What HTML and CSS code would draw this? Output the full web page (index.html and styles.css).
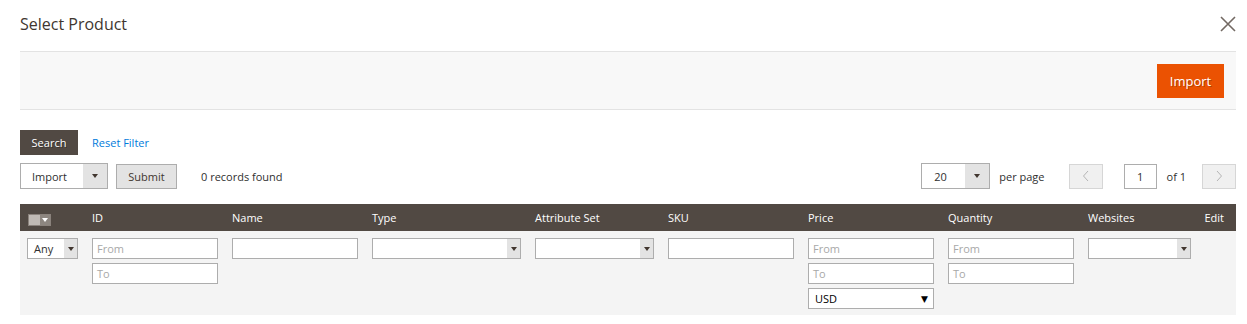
FILE: index.html
```html
<!DOCTYPE html>
<html>
<head>
<meta charset="utf-8">
<link rel="stylesheet" href="styles.css">
</head>
<body>
<div class="modal">
  <header class="modal-header">
    <h1 class="title">Select Product</h1>
    <button class="close" aria-label="Close">
      <svg width="16" height="16" viewBox="0 0 16 16"><path d="M1 1L15 15M15 1L1 15" stroke="#736963" stroke-width="1.6" fill="none"/></svg>
    </button>
  </header>
  <div class="toolbar">
    <button class="btn-primary">Import</button>
  </div>

  <div class="filter-actions">
    <button class="btn-search">Search</button>
    <a class="link" href="#">Reset Filter</a>
  </div>

  <div class="grid-bar">
    <div class="bar-left">
      <div class="sel sel-big w-import"><span class="sel-val">Import</span><span class="sel-arrow big"><i class="tri"></i></span></div>
      <button class="btn-secondary">Submit</button>
      <span class="records">0 records found</span>
    </div>
    <div class="bar-right">
      <div class="sel sel-big w-perpage"><span class="sel-val center">20</span><span class="sel-arrow big"><i class="tri"></i></span></div>
      <span class="txt">per page</span>
      <button class="pg-btn prev"><svg width="8" height="12" viewBox="0 0 8 12"><path d="M6 1L1.5 6L6 11" stroke="#b5b5b5" stroke-width="1" fill="none"/></svg></button>
      <div class="pg-input">1</div>
      <span class="txt of">of 1</span>
      <button class="pg-btn next"><svg width="8" height="12" viewBox="0 0 8 12"><path d="M2 1L6.5 6L2 11" stroke="#b5b5b5" stroke-width="1" fill="none"/></svg></button>
    </div>
  </div>

  <div class="table">
    <div class="th"><span class="mass"><span class="mass-box"></span><span class="mass-arr"><i class="tri sm"></i></span></span></div>
    <div class="th">ID</div>
    <div class="th">Name</div>
    <div class="th">Type</div>
    <div class="th">Attribute Set</div>
    <div class="th">SKU</div>
    <div class="th">Price</div>
    <div class="th">Quantity</div>
    <div class="th">Websites</div>
    <div class="th th-edit">Edit</div>

    <div class="td first">
      <div class="sel sm w-any"><span class="sel-val">Any</span><span class="sel-arrow"><i class="tri"></i></span></div>
    </div>
    <div class="td">
      <div class="inp ph">From</div>
      <div class="inp ph">To</div>
    </div>
    <div class="td"><div class="inp"></div></div>
    <div class="td"><div class="sel sm full"><span class="sel-val"></span><span class="sel-arrow"><i class="tri"></i></span></div></div>
    <div class="td"><div class="sel sm full"><span class="sel-val"></span><span class="sel-arrow"><i class="tri"></i></span></div></div>
    <div class="td"><div class="inp"></div></div>
    <div class="td">
      <div class="inp ph">From</div>
      <div class="inp ph">To</div>
      <div class="inp native"><span>USD</span><span class="blk">&#9660;</span></div>
    </div>
    <div class="td">
      <div class="inp ph">From</div>
      <div class="inp ph">To</div>
    </div>
    <div class="td"><div class="sel sm full"><span class="sel-val"></span><span class="sel-arrow"><i class="tri"></i></span></div></div>
    <div class="td"></div>
  </div>
</div>
</body>
</html>
```

FILE: styles.css
```css
* { box-sizing: border-box; }
html, body { margin: 0; padding: 0; background: #fff; }
body {
  font-family: "Open Sans", "DejaVu Sans", sans-serif;
  font-size: 11px;
  color: #303030;
}
button { font-family: inherit; cursor: pointer; }

.modal { padding: 0 11px 0 20px; }

.modal-header {
  height: 51px;
  display: flex;
  align-items: center;
  justify-content: space-between;
}
.title {
  margin: 0;
  font-size: 16px;
  font-weight: 400;
  color: #41362f;
  line-height: 1;
  padding-bottom: 4px;
}
.close {
  border: 0;
  background: none;
  padding: 0;
  width: 16px;
  height: 16px;
  margin-bottom: 4px;
  display: flex;
}

.toolbar {
  height: 59px;
  border-top: 1px solid #e3e3e3;
  border-bottom: 1px solid #e3e3e3;
  background: #f8f8f8;
  display: flex;
  align-items: center;
  justify-content: flex-end;
  padding-right: 12px;
}
.btn-primary {
  width: 67px;
  height: 34px;
  border: 0;
  background: #eb5202;
  color: #fff;
  font-size: 13px;
  padding: 0;
  text-shadow: 1px 1px 0 rgba(0,0,0,0.25);
}

.filter-actions {
  margin-top: 20px;
  display: flex;
  align-items: center;
  gap: 14px;
}
.btn-search {
  width: 58px;
  height: 25px;
  border: 0;
  background: #514943;
  color: #fff;
  font-size: 11px;
  padding: 0;
  text-shadow: 1px 1px 0 rgba(0,0,0,0.3);
}
.link { color: #007bdb; text-decoration: none; font-size: 11px; }

.grid-bar {
  margin-top: 8px;
  display: flex;
  justify-content: space-between;
  align-items: center;
  height: 26px;
}
.bar-left, .bar-right { display: flex; align-items: center; }

.sel {
  display: flex;
  background: #fff;
  border: 1px solid #adadad;
}
.sel-val {
  flex: 1;
  display: flex;
  align-items: center;
  padding-left: 11px;
  color: #303030;
}
.sel-val.center { padding-left: 12px; }
.sel-arrow {
  width: 13px;
  background: #e3e3e3;
  display: flex;
  align-items: center;
  justify-content: center;
}
.sel-arrow.big { width: 24px; }
.tri {
  width: 0; height: 0;
  border-left: 3px solid transparent;
  border-right: 3px solid transparent;
  border-top: 4px solid #41362f;
  display: block;
}
.tri.sm { border-top-color: #fff; }

.sel-big { height: 26px; }
.w-import { width: 88px; }
.w-perpage { width: 69px; }

.btn-secondary {
  margin-left: 8px;
  width: 61px;
  height: 25px;
  background: #e3e3e3;
  border: 1px solid #adadad;
  color: #41362f;
  font-size: 11px;
  padding: 0;
}
.records { margin-left: 24px; color: #303030; }

.txt { color: #303030; }
.bar-right .txt { margin-left: 9px; }
.pg-btn {
  width: 34px;
  height: 25px;
  background: #f0f0f0;
  border: 1px solid #d6d6d6;
  padding: 0;
  display: flex;
  align-items: center;
  justify-content: center;
}
.prev { margin-left: 24px; }
.pg-input {
  margin-left: 21px;
  width: 33px;
  height: 25px;
  border: 1px solid #adadad;
  background: #fff;
  display: flex;
  align-items: center;
  justify-content: center;
}
.bar-right .of { margin-left: 10px; }
.next { margin-left: 16px; }

.table {
  margin-top: 15px;
  display: grid;
  grid-template-columns: 64px 140px 140px 163px 133px 140px 140px 140px 117px 39px;
}
.th {
  height: 27px;
  background: #514943;
  color: #fff;
  padding-left: 8px;
  display: flex;
  align-items: center;
  font-size: 11px;
}
.th-edit { justify-content: flex-end; padding-right: 12px; padding-left: 0; }
.mass {
  display: flex;
  width: 23px;
  height: 12px;
  border: 1px solid #8a827c;
  margin-top: 4px;
}
.mass-box { width: 11px; background: #c0bab5; }
.mass-arr {
  flex: 1;
  background: #8d8680;
  display: flex;
  align-items: center;
  justify-content: center;
}

.td {
  background: #f4f4f4;
  padding: 7px 6px 6px 8px;
  display: flex;
  flex-direction: column;
  gap: 4px;
}
.td.first { padding-left: 7px; }
.sel.sm { height: 21px; }
.sel.sm .sel-val { padding-left: 6px; }
.w-any { width: 51px; }
.full { width: 100%; }

.inp {
  height: 21px;
  width: 100%;
  border: 1px solid #adadad;
  background: #fff;
  display: flex;
  align-items: center;
  padding-left: 4px;
  font-size: 11px;
}
.inp.ph { color: #a8a8a8; }
.inp.native {
  justify-content: space-between;
  padding: 0 5px 0 6px;
  color: #000;
}
.blk { font-size: 9px; color: #000; }
```
